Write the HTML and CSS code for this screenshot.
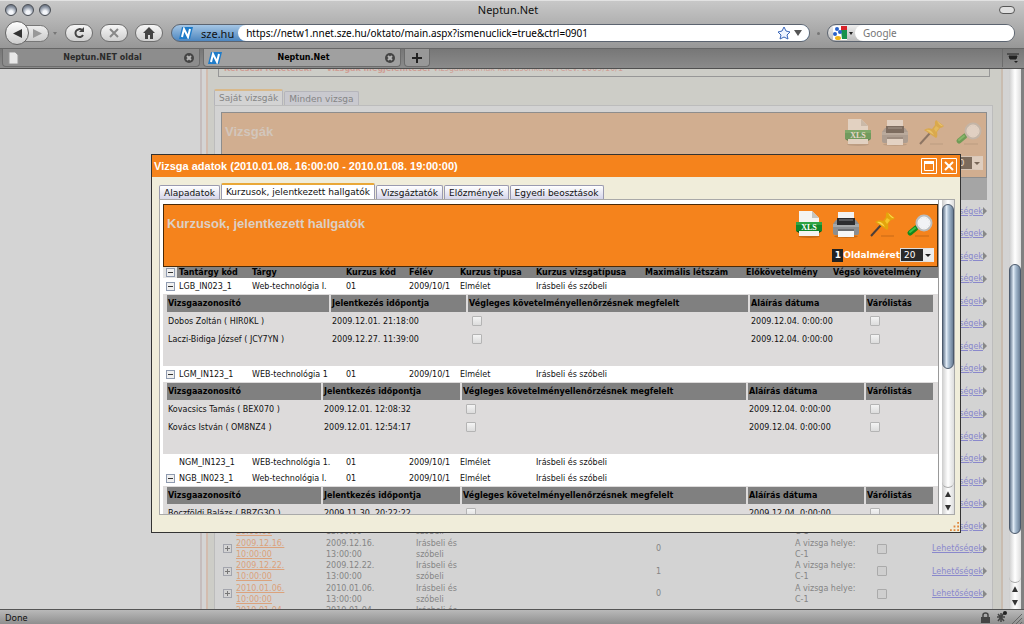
FILE: index.html
```html
<!DOCTYPE html>
<html lang="hu">
<head>
    <meta charset="UTF-8">
    <meta name="viewport" content="width=device-width, initial-scale=1.0">
    <title>Neptun.Net</title>
    <link rel="stylesheet" href="styles.css">
</head>
<body>

    <!-- Shared icons -->
    <svg class="icon-defs" aria-hidden="true">
        <symbol id="icon-xls" viewBox="0 0 28 29">
            <ellipse cx="14" cy="26.500" rx="11" ry="1.500" fill="#00000030"/>
            <path d="M4 1h13l7 7v18H4z" fill="#f4f4f2"/>
            <path d="M17 1v7h7z" fill="#c4c4c0"/>
            <path d="M1 12h26v9H1z" fill="#13872b"/>
            <path d="M1 12h26v3H1z" fill="#2fa444"/>
            <path d="M1 21l3 2V21zM27 21l-3 2V21z" fill="#0a5a1a"/>
            <text x="14" y="20" class="xls-text">XLS</text>
        </symbol>
        <symbol id="icon-print" viewBox="0 0 28 29">
            <ellipse cx="14" cy="26.500" rx="12" ry="1.500" fill="#00000030"/>
            <path d="M6 2h16v8H6z" fill="#f2f2f2"/>
            <path d="M4 10h20l3 4v9q0 2-2 2H3q-2 0-2-2v-9z" fill="#8b8e91"/>
            <path d="M1 14h26v3H1z" fill="#a4a7a9"/>
            <path d="M5 8h18v7H5z" fill="#2c2d30"/>
            <path d="M7 9h14v2H7z" fill="#55575b"/>
            <path d="M6 19h16v8H6z" fill="#f6f6f6"/>
            <path d="M6 19h16v2H6z" fill="#6a6c6f"/>
        </symbol>
        <symbol id="icon-pin" viewBox="0 0 28 29">
            <path d="M12 26h13" stroke="#00000030" stroke-width="1"/>
            <path d="M2 26L12 15" stroke="#4c3e38" stroke-width="2"/>
            <path d="M6 12q4-3 8-1l3-4q-1-3 1-5l8 6q-2 2-4 2l-3 4q1 5-1 6z" fill="#e4a50c"/>
            <path d="M19 3l6 5q-3 1-6-5zM8 12q5-1 8 5" fill="#ffd64a"/>
            <path d="M16 11l2-3 3 2-3 4z" fill="#f7c52c"/>
        </symbol>
        <symbol id="icon-search" viewBox="0 0 28 29">
            <path d="M9 26h14" stroke="#00000030" stroke-width="1"/>
            <path d="M4 23l6-5" stroke="#128a1d" stroke-width="5" stroke-linecap="round"/>
            <path d="M4 22l5-4" stroke="#3fbf45" stroke-width="2" stroke-linecap="round"/>
            <circle cx="18" cy="13" r="7" fill="#f1f3f5" stroke="#b9bdbf" stroke-width="3"/>
            <circle cx="18" cy="13" r="6" fill="none" stroke="#ffffff" stroke-width="1"/>
        </symbol>
        <symbol id="icon-n" viewBox="0 0 14 12">
            <path d="M3 0h11l-3 12H0z" fill="#1f7cc9"/>
            <path d="M3 10l2-8 4 8 2-8" fill="none" stroke="#fff" stroke-width="2"/>
        </symbol>
        <symbol id="icon-close" viewBox="0 0 10 10">
            <circle cx="5" cy="5" r="5" fill="#454545"/>
            <path d="M3 3l4 4M7 3L3 7" stroke="#b5b5b5" stroke-width="2"/>
        </symbol>
    </svg>

    <header class="browser">
        <div class="titlebar">
            <div class="lights"><i></i><i></i><i></i></div>
            <span class="window-title">Neptun.Net</span>
            <button class="pill" aria-label="Toolbar"></button>
        </div>
        <div class="navbar">
            <div class="history">
                <button class="back" aria-label="Back"><svg viewBox="0 0 10 10"><path d="M0 5l10-5v10z" fill="#333"/></svg></button>
                <button class="forward" aria-label="Forward"><svg viewBox="0 0 10 10"><path d="M10 5L0 0v10z" fill="#999"/></svg></button>
            </div>
            <span class="caret"></span>
            <button class="nav-btn" aria-label="Reload"><svg viewBox="0 0 12 12"><path d="M9 3a4 4 0 1 0 1 5" fill="none" stroke="#444" stroke-width="2"/><path d="M11 0v5H6z" fill="#444"/></svg></button>
            <button class="nav-btn" aria-label="Stop"><svg viewBox="0 0 12 12"><path d="M2 2l8 8M10 2l-8 8" stroke="#888" stroke-width="2"/></svg></button>
            <button class="nav-btn" aria-label="Home"><svg viewBox="0 0 12 12"><path d="M6 0l6 6h-2v6H7V8H5v4H2V6H0z" fill="#444"/></svg></button>
            <div class="address">
                <span class="site"><svg><use href="#icon-n"/></svg>sze.hu</span>
                <div class="field">
                    <input type="text" aria-label="Address" value="https://netw1.nnet.sze.hu/oktato/main.aspx?ismenuclick=true&amp;ctrl=0901">
                    <svg class="star" viewBox="0 0 14 14"><path d="M7 1l2 4 4 1-3 3 1 4-4-2-4 2 1-4-3-3 4-1z" fill="#eef4ff" stroke="#3a66b8"/></svg>
                    <svg class="down" viewBox="0 0 8 8"><path d="M0 1h8L4 7z" fill="#555"/></svg>
                </div>
            </div>
            <span class="dot"></span>
            <div class="search">
                <span class="engine"><svg viewBox="0 0 14 14"><path d="M0 0h14v14H0z" fill="#fff"/><path d="M8 0h6v4H8z" fill="#d8232a"/><path d="M8 4h6v9H9z" fill="#17924a"/><circle cx="4" cy="3" r="2" fill="#2a62c8"/><circle cx="7" cy="6" r="2" fill="#2a62c8"/><circle cx="2" cy="8" r="2" fill="#2a62c8"/><ellipse cx="5" cy="12" rx="3" ry="2" fill="#efb51b"/></svg><b class="caret dark"></b></span>
                <div class="field">
                    <input type="text" aria-label="Search" placeholder="Google">
                    <svg class="lens" viewBox="0 0 10 10"><circle cx="4" cy="4" r="3" fill="none" stroke="#444" stroke-width="1.500"/><path d="M6 6l3 3" stroke="#444" stroke-width="2"/></svg>
                </div>
            </div>
        </div>
        <nav class="tabbar">
            <div class="tab">
                <svg viewBox="0 0 14 12"><path d="M2 0h6l3 3v9H2z" fill="#e8e8e8" stroke="#999"/></svg>
                <span>Neptun.NET oldal</span>
                <button aria-label="Close tab"><svg><use href="#icon-close"/></svg></button>
            </div>
            <div class="tab current">
                <svg><use href="#icon-n"/></svg>
                <span>Neptun.Net</span>
                <button aria-label="Close tab"><svg><use href="#icon-close"/></svg></button>
            </div>
            <button class="new-tab" aria-label="New tab"><svg viewBox="0 0 10 10"><path d="M5 0v10M0 5h10" stroke="#222" stroke-width="2"/></svg></button>
            <button class="all-tabs" aria-label="List all tabs"><svg viewBox="0 0 12 12"><path d="M0 2h12M2 4h8l-1 3H3z" stroke="#222" fill="#222"/><path d="M7 9h4l-2 2z" fill="#222"/></svg></button>
        </nav>
    </header>

    <div class="viewport">
        <aside class="sidebar"></aside>
        <div class="splitter"></div>
        <main class="page">
            <div class="filter"><b>Keresési feltételek:</b><b>Vizsgák megjelenítése:</b> Vizsgaalkalmak kurzusonként, Félév: 2009/10/1</div>
            <div class="page-tabs">
                <button class="page-tab selected">Saját vizsgák</button>
                <button class="page-tab">Minden vizsga</button>
            </div>
            <section class="page-panel">
                <div class="list-head muted">
                    <h2>Vizsgák</h2>
                    <div class="tools">
                        <div class="icons">
                            <svg><use href="#icon-xls"/></svg>
                            <svg><use href="#icon-print"/></svg>
                            <svg><use href="#icon-pin"/></svg>
                            <svg><use href="#icon-search"/></svg>
                        </div>
                        <div class="pager">
                            <span class="select-box"><select aria-label="Oldalméret"><option>20</option></select></span>
                        </div>
                    </div>
                </div>
                <table class="exams">
                    <colgroup>
                        <col class="e-toggle"><col class="e-start"><col class="e-end"><col class="e-type"><col class="e-count"><col class="e-note"><col class="e-check"><col>
                    </colgroup>
                    <thead><tr><th colspan="8"></th></tr></thead>
                    <tbody>
                        <tr><td colspan="7"></td><td class="options"><a href="#">Lehetőségek</a></td></tr>
                        <tr><td colspan="7"></td><td class="options"><a href="#">Lehetőségek</a></td></tr>
                        <tr><td colspan="7"></td><td class="options"><a href="#">Lehetőségek</a></td></tr>
                        <tr><td colspan="7"></td><td class="options"><a href="#">Lehetőségek</a></td></tr>
                        <tr><td colspan="7"></td><td class="options"><a href="#">Lehetőségek</a></td></tr>
                        <tr><td colspan="7"></td><td class="options"><a href="#">Lehetőségek</a></td></tr>
                        <tr><td colspan="7"></td><td class="options"><a href="#">Lehetőségek</a></td></tr>
                        <tr><td colspan="7"></td><td class="options"><a href="#">Lehetőségek</a></td></tr>
                        <tr><td colspan="7"></td><td class="options"><a href="#">Lehetőségek</a></td></tr>
                        <tr><td colspan="7"></td><td class="options"><a href="#">Lehetőségek</a></td></tr>
                        <tr><td colspan="7"></td><td class="options"><a href="#">Lehetőségek</a></td></tr>
                        <tr><td colspan="7"></td><td class="options"><a href="#">Lehetőségek</a></td></tr>
                        <tr><td colspan="7"></td><td class="options"><a href="#">Lehetőségek</a></td></tr>
                        <tr><td colspan="7"></td><td class="options"><a href="#">Lehetőségek</a></td></tr>
                        <tr>
                            <td></td>
                            <td><a class="date" href="#">2009.12.15.<br>10:00:00</a></td><td>2009.12.15.<br>13:00:00</td><td>Irásbeli és<br>szóbeli</td><td></td><td>A vizsga helye:<br>C-1</td><td></td>
                            <td class="options"><a href="#">Lehetőségek</a></td>
                        </tr>
                        <tr>
                            <td><button class="toggle plus" aria-label="Kibontás"></button></td>
                            <td><a class="date" href="#">2009.12.16.<br>10:00:00</a></td><td>2009.12.16.<br>13:00:00</td><td>Irásbeli és<br>szóbeli</td><td>0</td><td>A vizsga helye:<br>C-1</td><td><input type="checkbox" aria-label="Kijelölés"></td>
                            <td class="options"><a href="#">Lehetőségek</a></td>
                        </tr>
                        <tr>
                            <td><button class="toggle plus" aria-label="Kibontás"></button></td>
                            <td><a class="date" href="#">2009.12.22.<br>10:00:00</a></td><td>2009.12.22.<br>13:00:00</td><td>Irásbeli és<br>szóbeli</td><td>1</td><td>A vizsga helye:<br>C-1</td><td><input type="checkbox" aria-label="Kijelölés"></td>
                            <td class="options"><a href="#">Lehetőségek</a></td>
                        </tr>
                        <tr>
                            <td><button class="toggle plus" aria-label="Kibontás"></button></td>
                            <td><a class="date" href="#">2010.01.06.<br>10:00:00</a></td><td>2010.01.06.<br>13:00:00</td><td>Irásbeli és<br>szóbeli</td><td>0</td><td>A vizsga helye:<br>C-1</td><td><input type="checkbox" aria-label="Kijelölés"></td>
                            <td class="options"><a href="#">Lehetőségek</a></td>
                        </tr>
                        <tr>
                            <td></td>
                            <td><a class="date" href="#">2010.01.04.<br>10:00:00</a></td><td>2010.01.04.<br>13:00:00</td><td>Irásbeli és<br>szóbeli</td><td></td><td></td><td></td><td></td>
                        </tr>
                    </tbody>
                </table>
            </section>
        </main>
        <div class="page-edge"></div>
        <div class="scrollbar outer"><div class="track"><div class="thumb"></div></div><i class="arrow up"></i><i class="arrow"></i></div>

        <!-- Exam details window -->
        <div class="dialog" role="dialog" aria-labelledby="dialogTitle">
            <div class="dialog-title">
                <h1 id="dialogTitle">Vizsga adatok (2010.01.08. 16:00:00 - 2010.01.08. 19:00:00)</h1>
                <button aria-label="Teljes méret"><svg viewBox="0 0 16 16"><path d="M.5.5h15v15H.5z" fill="none" stroke="#fff"/><path d="M3.500 4.500h9v8h-9z" fill="none" stroke="#fff"/><path d="M3 3h10v3H3z" fill="#fff"/></svg></button>
                <button aria-label="Bezárás"><svg viewBox="0 0 16 16"><path d="M.5.5h15v15H.5z" fill="none" stroke="#fff"/><path d="M4 4l8 8M12 4l-8 8" stroke="#fff" stroke-width="2"/></svg></button>
            </div>
            <div class="dialog-tabs">
                <button>Alapadatok</button>
                <button class="selected">Kurzusok, jelentkezett hallgatók</button>
                <button>Vizsgáztatók</button>
                <button>Előzmények</button>
                <button>Egyedi beosztások</button>
            </div>
            <div class="dialog-body">
                <div class="dialog-content">
                    <div class="list-head">
                        <h2>Kurzusok, jelentkezett hallgatók</h2>
                        <div class="tools">
                            <div class="icons">
                                <svg><use href="#icon-xls"/></svg>
                                <svg><use href="#icon-print"/></svg>
                                <svg><use href="#icon-pin"/></svg>
                                <svg><use href="#icon-search"/></svg>
                            </div>
                            <div class="pager">
                                <span class="page-no">1</span>
                                <label for="pageSize">Oldalméret</label>
                                <span class="select-box"><select id="pageSize"><option>20</option></select></span>
                            </div>
                        </div>
                    </div>
                    <table class="courses">
                        <colgroup>
                            <col class="c-toggle"><col class="c-code"><col class="c-name"><col class="c-course"><col class="c-term"><col class="c-type"><col class="c-exam"><col class="c-max"><col class="c-pre"><col>
                        </colgroup>
                        <thead>
                            <tr>
                                <th class="corner"><button class="toggle" aria-label="Összecsukás"></button></th>
                                <th>Tantárgy kód</th><th>Tárgy</th><th>Kurzus kód</th><th>Félév</th><th>Kurzus típusa</th><th>Kurzus vizsgatípusa</th><th>Maximális létszám</th><th>Előkövetelmény</th><th>Végső követelmény</th>
                            </tr>
                        </thead>
                        <tbody>
                            <tr class="course">
                                <td><button class="toggle" aria-label="Összecsukás"></button></td>
                                <td>LGB_IN023_1</td><td>Web-technológia I.</td><td>01</td><td>2009/10/1</td><td>Elmélet</td><td>Irásbeli és szóbeli</td><td></td><td></td><td></td>
                            </tr>
                            <tr>
                                <td class="nested" colspan="10">
                                    <table class="students wide">
                                        <colgroup><col class="s-id"><col class="s-time"><col class="s-final"><col class="s-sign"><col></colgroup>
                                        <tr><th>Vizsgaazonosító</th><th>Jelentkezés időpontja</th><th>Végleges követelményellenőrzésnek megfelelt</th><th>Aláírás dátuma</th><th>Várólistás</th></tr>
                                        <tr><td>Dobos Zoltán ( HIR0KL )</td><td>2009.12.01. 21:18:00</td><td><input type="checkbox" aria-label="Megfelelt"></td><td>2009.12.04. 0:00:00</td><td><input type="checkbox" aria-label="Várólistás"></td></tr>
                                        <tr><td>Laczi-Bidiga József ( JCY7YN )</td><td>2009.12.27. 11:39:00</td><td><input type="checkbox" aria-label="Megfelelt"></td><td>2009.12.04. 0:00:00</td><td><input type="checkbox" aria-label="Várólistás"></td></tr>
                                    </table>
                                </td>
                            </tr>
                            <tr class="course">
                                <td><button class="toggle" aria-label="Összecsukás"></button></td>
                                <td>LGM_IN123_1</td><td>WEB-technológia 1</td><td>01</td><td>2009/10/1</td><td>Elmélet</td><td>Irásbeli és szóbeli</td><td></td><td></td><td></td>
                            </tr>
                            <tr>
                                <td class="nested" colspan="10">
                                    <table class="students">
                                        <colgroup><col class="s-id"><col class="s-time"><col class="s-final"><col class="s-sign"><col></colgroup>
                                        <tr><th>Vizsgaazonosító</th><th>Jelentkezés időpontja</th><th>Végleges követelményellenőrzésnek megfelelt</th><th>Aláírás dátuma</th><th>Várólistás</th></tr>
                                        <tr><td>Kovacsics Tamás ( BEX070 )</td><td>2009.12.01. 12:08:32</td><td><input type="checkbox" aria-label="Megfelelt"></td><td>2009.12.04. 0:00:00</td><td><input type="checkbox" aria-label="Várólistás"></td></tr>
                                        <tr><td>Kovács István ( OM8NZ4 )</td><td>2009.12.01. 12:54:17</td><td><input type="checkbox" aria-label="Megfelelt"></td><td>2009.12.04. 0:00:00</td><td><input type="checkbox" aria-label="Várólistás"></td></tr>
                                    </table>
                                </td>
                            </tr>
                            <tr class="course">
                                <td></td>
                                <td>NGM_IN123_1</td><td>WEB-technológia 1.</td><td>01</td><td>2009/10/1</td><td>Elmélet</td><td>Irásbeli és szóbeli</td><td></td><td></td><td></td>
                            </tr>
                            <tr class="course">
                                <td><button class="toggle" aria-label="Összecsukás"></button></td>
                                <td>NGB_IN023_1</td><td>Web-technológia I.</td><td>01</td><td>2009/10/1</td><td>Elmélet</td><td>Irásbeli és szóbeli</td><td></td><td></td><td></td>
                            </tr>
                            <tr>
                                <td class="nested" colspan="10">
                                    <table class="students">
                                        <colgroup><col class="s-id"><col class="s-time"><col class="s-final"><col class="s-sign"><col></colgroup>
                                        <tr><th>Vizsgaazonosító</th><th>Jelentkezés időpontja</th><th>Végleges követelményellenőrzésnek megfelelt</th><th>Aláírás dátuma</th><th>Várólistás</th></tr>
                                        <tr><td>Boczföldi Balázs ( BBZG3O )</td><td>2009.11.30. 20:22:22</td><td><input type="checkbox" aria-label="Megfelelt"></td><td>2009.12.04. 0:00:00</td><td><input type="checkbox" aria-label="Várólistás"></td></tr>
                                    </table>
                                </td>
                            </tr>
                        </tbody>
                    </table>
                </div>
                <div class="scrollbar inner"><div class="track"><div class="thumb"></div></div><i class="arrow up"></i><i class="arrow"></i></div>
            </div>
            <svg class="grip" viewBox="0 0 10 10"><path d="M8 0h2v2H8zM4 4h2v2H4zM8 4h2v2H8zM0 8h2v2H0zM4 8h2v2H4zM8 8h2v2H8z" fill="#e0883c"/></svg>
        </div>
    </div>

    <footer class="statusbar">
        <span>Done</span>
        <svg viewBox="0 0 46 13"><path d="M5 6h9v6H5z" fill="#444"/><path d="M7 6V4q0-2 2.500-2T12 4v2" fill="none" stroke="#444" stroke-width="1.500"/><path d="M21 6h8M22 3l6 7M28 2l-6 8M25 2v9" stroke="#444" stroke-width="1.500"/><circle cx="29" cy="2" r="2" fill="#222"/><path d="M36 13L46 3M40 13l6-6M44 13l2-2" stroke="#666"/></svg>
    </footer>

</body>
</html>
```
FILE: styles.css
```css
* {
    box-sizing: border-box;
}

body {
    display: flex;
    flex-direction: column;
    height: 100vh;
    margin: 0;
    overflow: hidden;
    font-family: "DejaVu Sans", Verdana, sans-serif;
    font-size: 8px;
    line-height: 11px;
    color: #111;
    background-color: #d4d4d4;
}

button {
    padding: 0;
    border: none;
    background: none;
    font: inherit;
    color: inherit;
}

h1, h2 {
    margin: 0;
    font-family: "Liberation Sans", Arial, sans-serif;
}

svg {
    display: block;
}

.icon-defs {
    position: absolute;
    width: 0;
    height: 0;
}

.xls-text {
    font: bold 8px "Liberation Serif", serif;
    fill: #fff;
    text-anchor: middle;
}

/* Browser frame */
.browser {
    flex: none;
    font-family: "Noto Sans", sans-serif;
    font-size: 10px;
    background: linear-gradient(#c9c9c9, #979797 48px);
}

.titlebar {
    display: flex;
    align-items: center;
    justify-content: space-between;
    height: 18px;
    padding: 0 9px 0 5px;
    border-top: 1px solid #e2e2e2;
}

.lights {
    display: flex;
    gap: 5px;
}

.lights i {
    width: 12px;
    height: 12px;
    border: 1px solid #4a4e55;
    border-radius: 50%;
    background: radial-gradient(circle at 50% 75%, #f4f6fa 20%, #8f98a6 60%, #4f5866);
}

.window-title {
    flex: 1;
    padding-right: 34px;
    text-align: center;
    font-size: 11px;
    line-height: 15px;
    color: #111;
}

.pill {
    width: 16px;
    height: 8px;
    border: 1px solid #555;
    border-radius: 4px;
    background-color: #e0e0e0;
}

.navbar {
    display: flex;
    align-items: center;
    height: 30px;
    padding: 0 9px 0 5px;
    gap: 8px;
}

.history {
    display: flex;
    align-items: center;
}

.history svg {
    width: 9px;
    height: 9px;
    margin: auto;
}

.back {
    width: 24px;
    height: 24px;
    border: 1px solid #666;
    border-radius: 50%;
    background: linear-gradient(#fff, #ccc);
    z-index: 1;
}

.forward {
    width: 24px;
    height: 17px;
    margin-left: -4px;
    border: 1px solid #777;
    border-radius: 0 9px 9px 0;
    background: linear-gradient(#eee, #ccc);
}

.caret {
    border: 2px solid transparent;
    border-top: 3px solid #777;
    border-bottom: 0;
}

.history + .caret {
    margin: 0 -4px;
}

.caret.dark {
    border-top-color: #222;
}

.nav-btn {
    width: 28px;
    height: 18px;
    margin-left: -1px;
    border: 1px solid #6e6e6e;
    border-radius: 9px;
    background: linear-gradient(#f6f6f6, #cfcfcf);
}

.nav-btn:nth-of-type(1) {
    margin-left: 4px;
}

.nav-btn svg {
    width: 12px;
    height: 12px;
    margin: auto;
}

.address,
.search {
    display: flex;
    align-items: center;
    height: 18px;
    border: 1px solid #5c6470;
    border-radius: 9px;
    overflow: hidden;
}

.address {
    flex: 1;
    background: linear-gradient(#a5c6e5, #4d86bf);
}

.search {
    width: 188px;
    background: linear-gradient(#eee, #bbb);
}

.site {
    display: flex;
    align-items: center;
    gap: 8px;
    padding: 0 4px 0 7px;
    font-size: 11px;
}

.site svg {
    width: 14px;
    height: 12px;
}

.field {
    display: flex;
    align-items: center;
    flex: 1;
    height: 16px;
    padding-right: 7px;
    border-radius: 8px 0 0 8px;
    background-color: #fff;
}

.field input {
    flex: 1;
    min-width: 0;
    height: 16px;
    padding: 0 8px;
    border: none;
    background: none;
    font: inherit;
    color: #000;
}

.star {
    width: 14px;
    height: 14px;
}

.down {
    width: 8px;
    height: 8px;
    margin-left: 3px;
}

.dot {
    width: 3px;
    height: 3px;
    margin: 0 -1px;
    border-radius: 50%;
    background-color: #777;
}

.engine {
    display: flex;
    align-items: center;
    gap: 2px;
    padding: 0 2px 0 5px;
}

.engine svg {
    width: 14px;
    height: 14px;
}

.lens {
    width: 10px;
    height: 10px;
}

.tabbar {
    display: flex;
    align-items: stretch;
    height: 21px;
    padding: 0 2px 1px;
    gap: 3px;
    border-top: 1px solid #666;
    border-bottom: 1px solid #505050;
    background: linear-gradient(#777, #8b8b8b);
}

.tab {
    display: flex;
    align-items: center;
    width: 198px;
    padding: 0 5px 0 4px;
    border: 1px solid #6c6c6c;
    border-top: none;
    border-radius: 0 0 4px 4px;
    background-color: #8d8d8d;
    color: #2b2b2b;
    font: bold 8px "DejaVu Sans", sans-serif;
}

.tab.current {
    background-color: #a0a0a0;
    color: #000;
}

.tab > svg {
    width: 14px;
    height: 12px;
}

.tab span {
    flex: 1;
    text-align: center;
}

.tab button svg {
    width: 10px;
    height: 10px;
}

.new-tab {
    width: 26px;
    border: 1px solid #6c6c6c;
    border-top: none;
    border-radius: 0 0 4px 4px;
    background-color: #989898;
}

.new-tab svg {
    width: 10px;
    height: 10px;
    margin: auto;
}

.all-tabs {
    width: 20px;
    margin-left: auto;
    border-left: 1px solid #6c6c6c;
}

.all-tabs svg {
    width: 12px;
    height: 12px;
    margin: auto;
}

/* Page behind the dialog */
.viewport {
    position: relative;
    display: flex;
    flex: 1;
    min-height: 0;
    overflow: hidden;
    border-right: 3px solid #808080;
}

.sidebar {
    width: 200px;
    flex: none;
}

.splitter {
    width: 8px;
    flex: none;
    border-left: 2px solid #c5bdbd;
    border-right: 2px solid #d3bcae;
}

.page {
    flex: 1;
    min-width: 0;
    padding: 0 8px 0 6px;
    background-color: #cdcdc7;
    color: #858585;
}

.filter {
    height: 16px;
    margin: -8px 3px 12px 4px;
    padding: 1px 5px;
    border: 1px solid #979797;
    color: #cf9f96;
}

.filter b:first-child {
    margin-right: 14px;
}

.page-tabs,
.dialog-tabs {
    display: flex;
    align-items: flex-end;
    gap: 1px;
}

.page-tab,
.dialog-tabs button {
    height: 14px;
    padding: 0 4px;
    border: 1px solid #b5b5bb;
    border-bottom: none;
    border-radius: 2px 2px 0 0;
    font-size: 9px;
    line-height: 12px;
}

.page-tab {
    background-color: #c9c9cf;
}

.page-tab.selected {
    height: 16px;
    border-top: 2px solid #d9b98a;
    background-color: #d3d3d3;
}

.page-panel {
    height: 600px;
    padding: 6px 5px 0 6px;
    border: 1px solid #bcbcbc;
    background-color: #d3d3d3;
}

.page-edge {
    width: 8px;
    flex: none;
    border-left: 2px solid #c9bcb0;
    background-color: #d3d3d3;
}

.list-head {
    display: flex;
    justify-content: space-between;
    height: 63px;
    padding: 5px 3px 0;
    border: 1px solid #4a2a08;
    background-color: #f5831c;
}

.list-head h2 {
    padding-top: 7px;
    font-size: 13px;
    line-height: 14px;
    color: #dcd0c5;
}

.tools {
    display: flex;
    flex-direction: column;
    align-items: flex-end;
    gap: 9px;
}

.icons {
    display: flex;
    gap: 9px;
}

.icons svg {
    width: 28px;
    height: 29px;
}

.pager {
    display: flex;
    align-items: center;
    color: #fff;
    font-weight: bold;
    font-size: 9px;
}

.page-no {
    width: 11px;
    height: 13px;
    line-height: 13px;
    background-color: #222;
    text-align: center;
}

.select-box {
    position: relative;
    display: flex;
}

.select-box select {
    width: 34px;
    height: 14px;
    padding: 0 3px;
    border: 1px solid #ddd;
    border-right: 11px solid #ececec;
    border-radius: 0;
    appearance: none;
    background-color: #2a2a2a;
    color: #fff;
    font: 9px "DejaVu Sans", sans-serif;
}

.select-box::after {
    content: "";
    position: absolute;
    top: 6px;
    right: 3px;
    border: 3px solid transparent;
    border-top: 3px solid #222;
}

.muted {
    height: 66px;
    border-color: #8d8d8d;
    background-color: #d1ae90;
}

.muted h2 {
    color: #d2c6bc;
}

.muted .icons {
    opacity: 0.5;
}

.muted .pager {
    opacity: 0.5;
}

.exams {
    width: 100%;
    border-collapse: collapse;
    table-layout: fixed;
}

.exams th {
    height: 22px;
    background-color: #a5a5a5;
}

.exams td {
    height: 22px;
    padding: 0;
    line-height: 11px;
}

.exams tr:nth-child(2n) td {
    height: 23px;
}

.e-toggle { width: 15px; }
.e-start { width: 90px; }
.e-end { width: 90px; }
.e-type { width: 240px; }
.e-count { width: 139px; }
.e-note { width: 82px; }
.e-check { width: 36px; }

.exams .date {
    color: #dba27c;
}

.exams .options {
    text-align: right;
    white-space: nowrap;
}

.options a {
    color: #8a88cc;
}

.options a::after {
    content: "";
    display: inline-block;
    border: 4px solid transparent;
    border-left: 4px solid #888;
    border-right: 0;
    vertical-align: middle;
}

.toggle {
    display: block;
    width: 9px;
    height: 9px;
    margin: 0 auto 0 3px;
    border: 1px solid #8f9bb0;
    background: linear-gradient(#333, #333) center / 5px 1px no-repeat #f0f0f0;
}

.toggle.plus {
    margin-left: 2px;
    border-color: #a3a5ad;
    background: linear-gradient(#777, #777) center / 5px 1px no-repeat, linear-gradient(#777, #777) center / 1px 5px no-repeat #d3d3d3;
}

input[type="checkbox"] {
    display: block;
    width: 10px;
    height: 10px;
    margin: 0 0 0 3px;
    appearance: none;
    border: 1px solid #b4b4b4;
    border-radius: 1px;
    background: linear-gradient(#f4f4f4, #dcdcdc);
}

.exams input[type="checkbox"] {
    margin-left: 0;
    border-color: #aaa;
    background: #cfcfcf;
}

/* Scrollbars */
.scrollbar {
    display: flex;
    flex-direction: column;
    width: 12px;
    flex: none;
    background: linear-gradient(90deg, #ccc, #fff 50%, #ddd);
}

.track {
    display: flex;
    flex-direction: column;
    flex: 1;
    border-bottom: 1px solid #aaa;
    border-radius: 0 0 6px 6px;
}

.thumb {
    border: 1px solid #4c5a6c;
    border-radius: 6px;
    background: linear-gradient(90deg, #66788e, #dfeaf5 35%, #a3b8cd 60%, #6b7f96);
}

.outer .thumb {
    height: 270px;
    margin-top: 195px;
}

.inner .thumb {
    height: 165px;
    margin-top: 4px;
}

.arrow {
    width: 6px;
    height: 13px;
    margin: 0 auto;
    background-color: #333;
    clip-path: polygon(0 30%, 100% 30%, 50% 75%);
}

.arrow.up {
    clip-path: polygon(0 70%, 100% 70%, 50% 25%);
}

/* Dialog */
.dialog {
    position: absolute;
    top: 85px;
    left: 151px;
    right: 60px;
    height: 379px;
    display: flex;
    flex-direction: column;
    border: 1px solid #333;
    background-color: #f0edda;
}

.dialog-title {
    display: flex;
    align-items: center;
    gap: 4px;
    height: 22px;
    padding: 0 3px 0 2px;
    background-color: #f5831c;
    color: #fff;
}

.dialog-title h1 {
    flex: 1;
    font-size: 11px;
}

.dialog-title svg {
    width: 16px;
    height: 16px;
}

.dialog-tabs {
    height: 22px;
    padding: 0 7px;
}

.dialog-tabs button {
    border-color: #9a9ab0;
    background: linear-gradient(#fff, #d5d5ea);
    white-space: nowrap;
}

.dialog-tabs .selected {
    height: 16px;
    border-top: 2px solid #e9a838;
    background: #fff;
}

.dialog-body {
    display: flex;
    flex: 1;
    min-height: 0;
    margin: 0 5px 17px 7px;
    border: 1px solid #a9a9a9;
    background-color: #fff;
    overflow: hidden;
}

.dialog-content {
    flex: 1;
    min-width: 0;
    margin-right: 3px;
    padding: 4px 0 0 3px;
    border-right: 1px solid #999;
    overflow: hidden;
}

.courses,
.students {
    width: 100%;
    border-collapse: collapse;
    table-layout: fixed;
    text-align: left;
    white-space: nowrap;
}

.courses th {
    height: 11px;
    padding: 0 0 0 2px;
    background-color: #808080;
    color: #000;
}

.courses .corner {
    padding: 0;
    background-color: #e4e4e4;
}

.courses td {
    padding: 0 0 0 2px;
}

.courses .course td {
    height: 16px;
}

.courses .course td:first-child {
    padding: 0;
}

.c-toggle { width: 14px; }
.c-code { width: 73px; }
.c-name { width: 94px; }
.c-course { width: 63px; }
.c-term { width: 51px; }
.c-type { width: 76px; }
.c-exam { width: 109px; }
.c-max { width: 101px; }
.c-pre { width: 87px; }

.courses .nested {
    height: 72px;
    padding: 1px 5px 0 2px;
    background-color: #dddbdb;
    vertical-align: top;
}

.students th {
    height: 17px;
    border-left: 2px solid #dddbdb;
    padding-left: 1px;
}

.students td {
    height: 18px;
    padding-left: 2px;
}

.s-id { width: 156px; }
.s-time { width: 139px; }
.s-final { width: 286px; }
.s-sign { width: 118px; }
.wide .s-id { width: 164px; }
.wide .s-time { width: 137px; }
.wide .s-final { width: 282px; }
.wide .s-sign { width: 116px; }

.grip {
    position: absolute;
    right: 1px;
    bottom: 1px;
    width: 9px;
    height: 9px;
}

/* Status bar */
.statusbar {
    display: flex;
    align-items: center;
    justify-content: space-between;
    flex: none;
    height: 15px;
    padding-left: 5px;
    border-top: 1px solid #555;
    background: linear-gradient(#b9b9b9, #8f8f8f);
    font: 9px "Noto Sans", sans-serif;
}

.statusbar svg {
    width: 50px;
    height: 13px;
}
```
